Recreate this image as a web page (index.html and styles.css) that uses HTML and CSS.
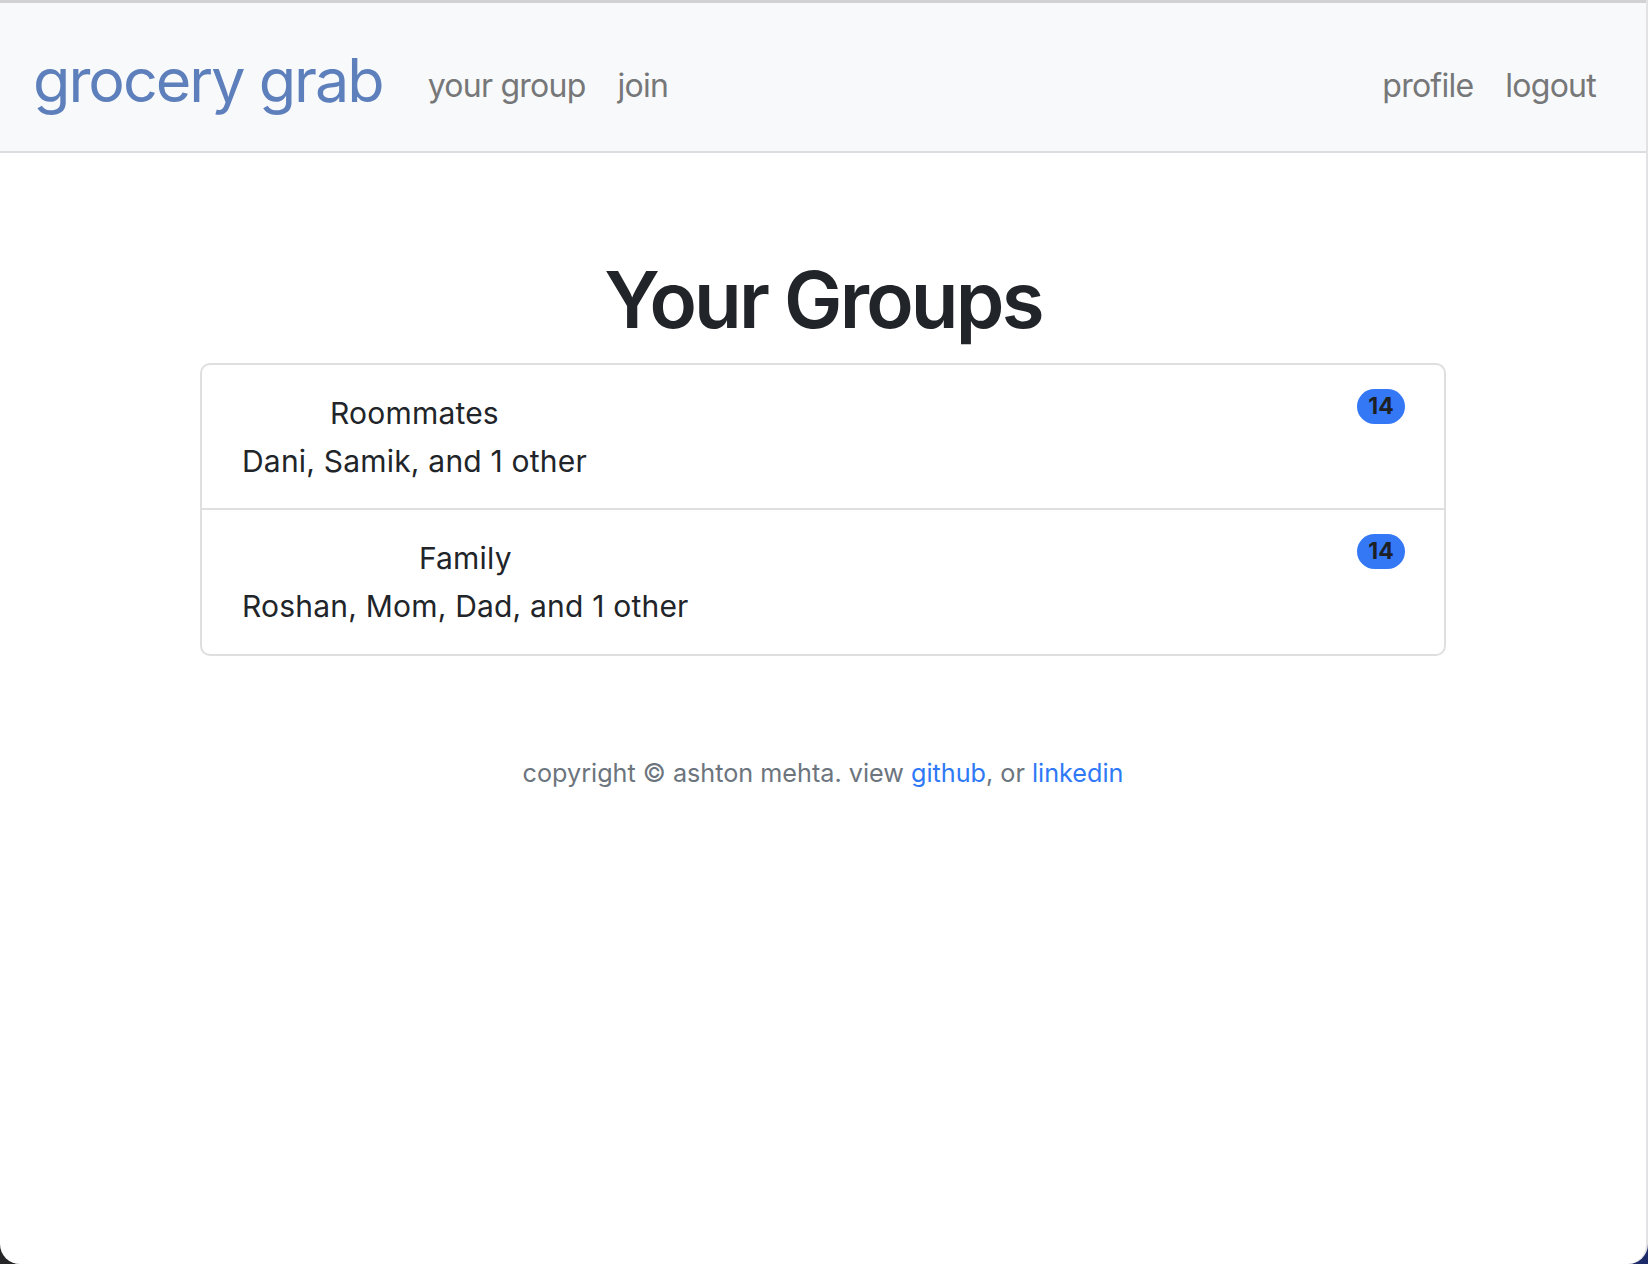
FILE: index.html
```html
<!DOCTYPE html>
<html lang="en">
<head>
<meta charset="utf-8">
<title>grocery grab</title>
<link rel="stylesheet" href="styles.css">
</head>
<body>
<div class="window">
  <header class="navbar">
    <a class="brand" href="#">grocery grab</a>
    <nav class="nav nav-left">
      <a class="nav-link" href="#">your group</a>
      <a class="nav-link" href="#">join</a>
    </nav>
    <nav class="nav nav-right">
      <a class="nav-link" href="#">profile</a>
      <a class="nav-link" href="#">logout</a>
    </nav>
  </header>
  <main class="content">
    <h1 class="title">Your Groups</h1>
    <ul class="group-list">
      <li class="group-item">
        <div class="group-text">
          <div class="group-name">Roommates</div>
          <div class="group-members">Dani, Samik, and 1 other</div>
        </div>
        <span class="badge">14</span>
      </li>
      <li class="group-item">
        <div class="group-text">
          <div class="group-name">Family</div>
          <div class="group-members">Roshan, Mom, Dad, and 1 other</div>
        </div>
        <span class="badge">14</span>
      </li>
    </ul>
  </main>
  <footer class="footer">copyright © ashton mehta. view <a href="#">github</a>, or <a href="#">linkedin</a></footer>
</div>
</body>
</html>
```
FILE: styles.css
```css
* { box-sizing: border-box; }
html {
  background: linear-gradient(90deg, #262628 0%, #1c2a6a 100%);
  height: 100%;
}
body {
  margin: 0;
  height: 100%;
  font-family: Inter, "Liberation Sans", sans-serif;
  color: #212529;
}
a { text-decoration: none; }
.window {
  min-height: 100%;
  background: #fff;
  border-right: 2px solid #e2e2e4;
  border-radius: 0 0 20px 20px;
  overflow: hidden;
}
.navbar {
  display: flex;
  align-items: flex-start;
  height: 153px;
  background: #f8f9fa;
  border-top: 3px solid #d2d2d5;
  border-bottom: 2px solid #dcdde0;
  padding: 0 34px 0 33px;
}
.brand {
  font-size: 61px;
  line-height: 1;
  color: #5d7fbc;
  margin-top: 47px;
  margin-right: 29px;
  letter-spacing: -2px;
}
.nav {
  display: flex;
  margin-top: 59px;
}
.nav-right { margin-left: auto; }
.nav-link {
  font-size: 32px;
  line-height: 1.5;
  letter-spacing: -0.75px;
  color: #767778;
  padding: 0 16px;
}
.content {
  padding-top: 99px;
  display: flex;
  flex-direction: column;
  align-items: center;
}
.title {
  margin: 0 0 15px;
  font-size: 78px;
  line-height: 1.23;
  font-weight: 560;
  letter-spacing: -2.8px;
  text-align: center;
}
.group-list {
  list-style: none;
  margin: 0;
  padding: 0 0 1px;
  width: 1246px;
  border: 2px solid #dfdfdf;
  border-radius: 10px;
}
.group-item {
  display: flex;
  align-items: flex-start;
  justify-content: space-between;
  padding: 24px 39px 23px 40px;
  font-size: 30px;
  line-height: 48px;
  letter-spacing: 0.2px;
}
.group-item + .group-item { border-top: 2px solid #dfdfdf; }
.group-text { text-align: center; }
.badge {
  display: inline-flex;
  align-items: center;
  justify-content: center;
  height: 35px;
  min-width: 48px;
  padding: 0 11px;
  border-radius: 18px;
  background: #3478f6;
  color: #1d2126;
  font-size: 23px;
  font-weight: 700;
  line-height: 1;
  letter-spacing: 0;
}
.footer {
  margin-top: 99px;
  text-align: center;
  font-size: 25.2px;
  line-height: 1.5;
  color: #6c757d;
}
.footer a { color: #2f79f6; }
```
